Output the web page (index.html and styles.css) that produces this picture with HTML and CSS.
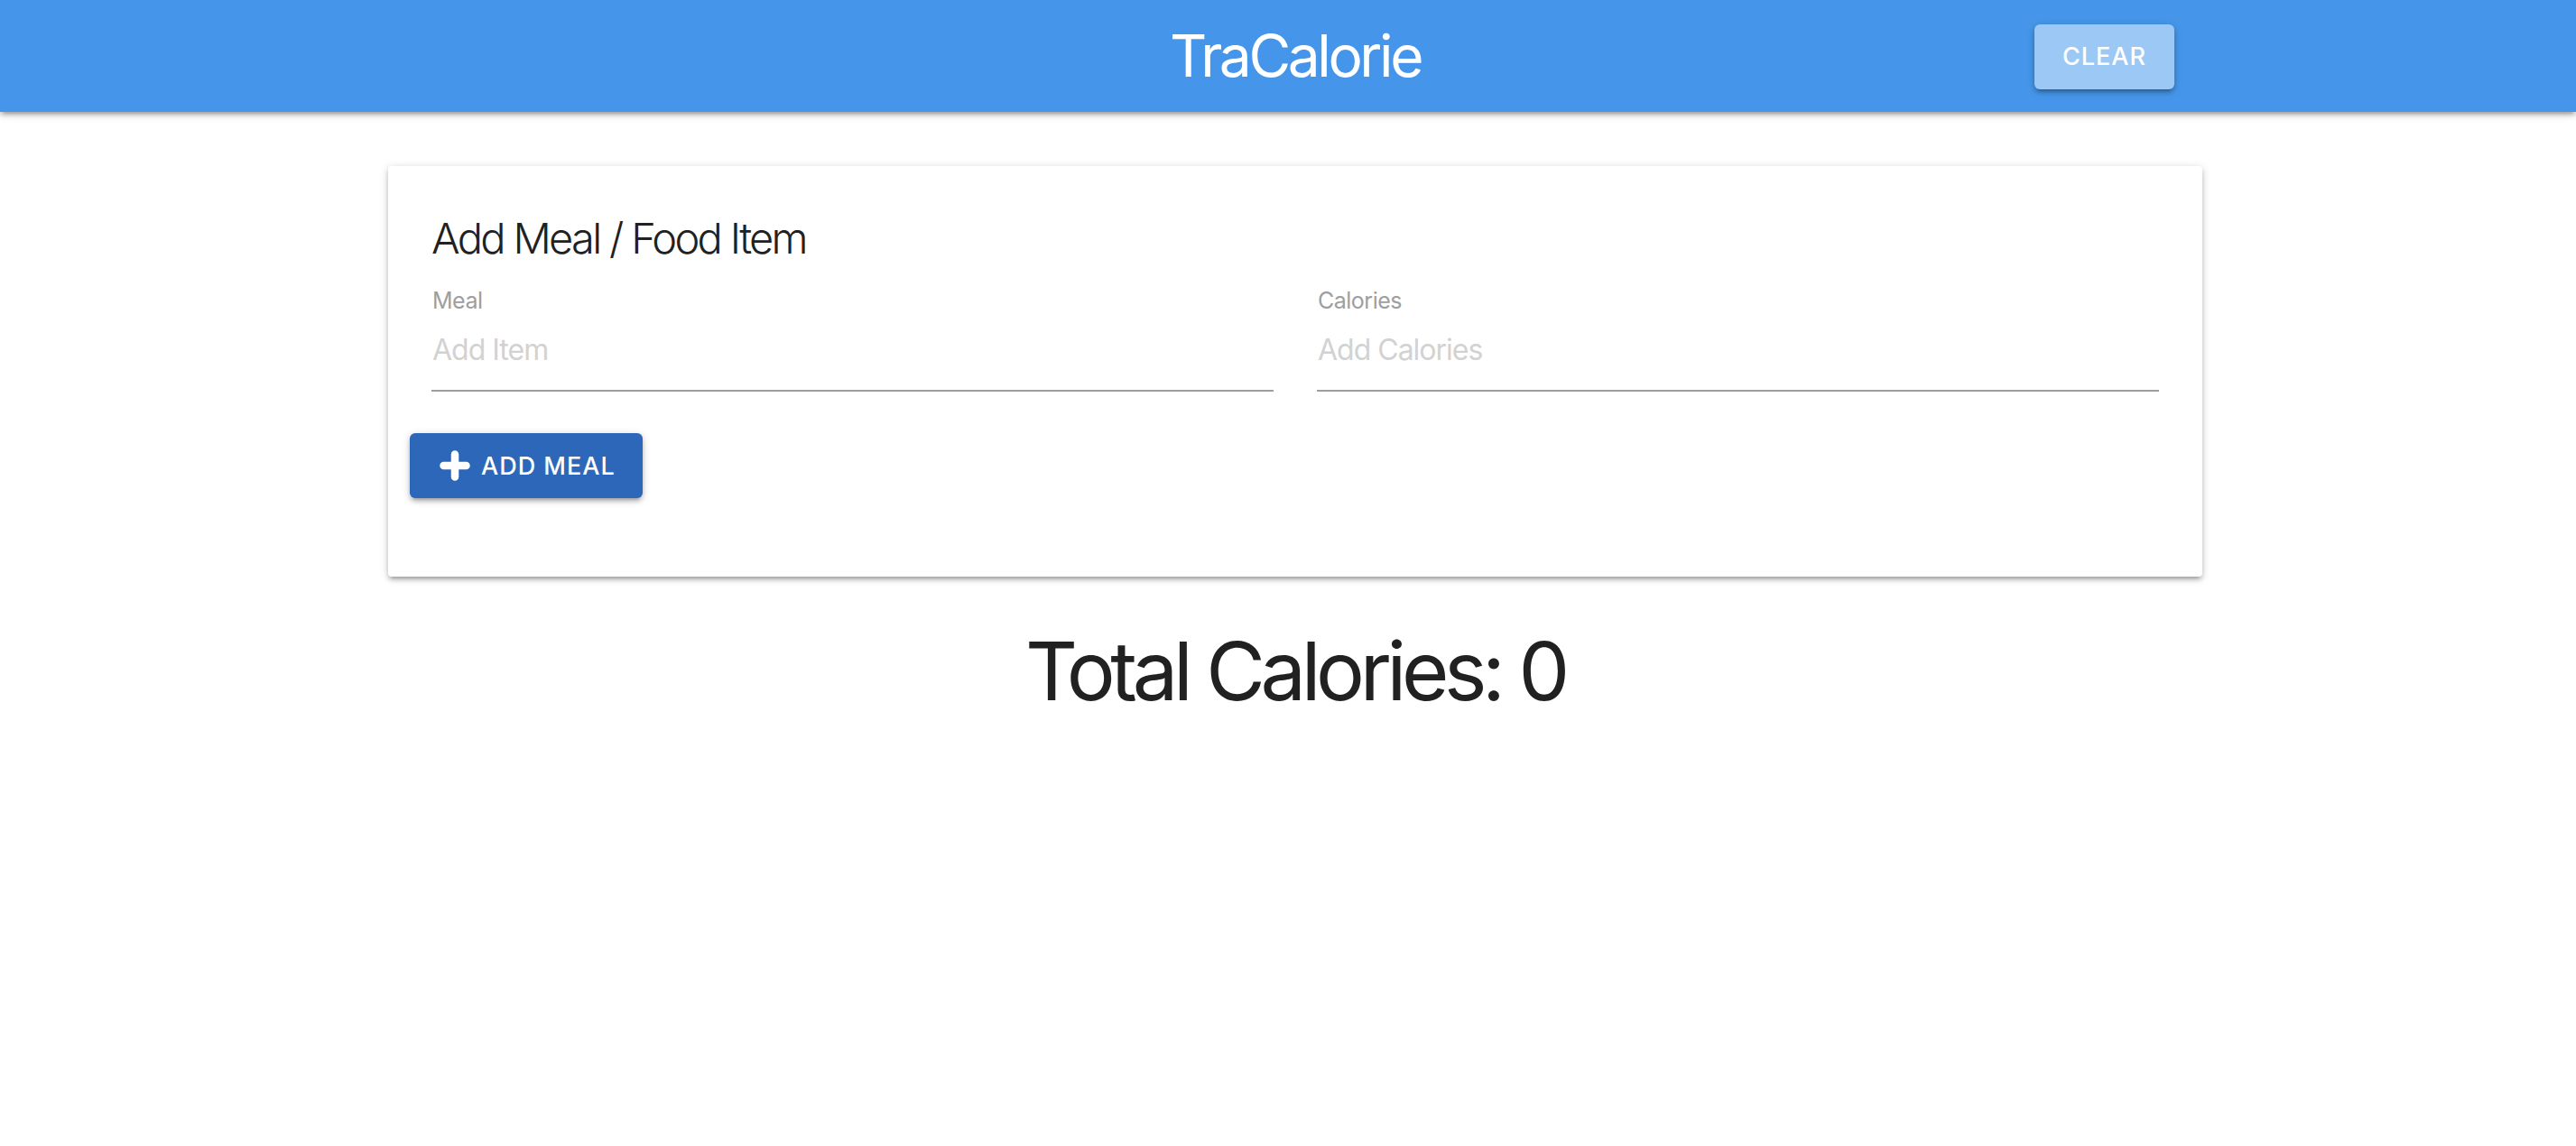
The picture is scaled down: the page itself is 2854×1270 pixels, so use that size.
FILE: index.html
```html
<!DOCTYPE html>
<html lang="en">
<head>
<meta charset="utf-8">
<title>TraCalorie</title>
<link rel="stylesheet" href="styles.css">
</head>
<body>
  <nav class="navbar">
    <div class="nav-inner">
      <span class="nav-spacer"></span>
      <a class="brand">TraCalorie</a>
      <div class="nav-actions">
        <button class="btn btn-clear">Clear</button>
      </div>
    </div>
  </nav>

  <main class="container">
    <section class="card">
      <h2 class="card-title">Add Meal / Food Item</h2>
      <form class="meal-form">
        <div class="fields">
          <div class="field">
            <label class="field-label" for="item-name">Meal</label>
            <input class="field-input" id="item-name" type="text" placeholder="Add Item">
          </div>
          <div class="field">
            <label class="field-label" for="item-calories">Calories</label>
            <input class="field-input" id="item-calories" type="text" placeholder="Add Calories">
          </div>
        </div>
        <button type="button" class="btn btn-add">
          <svg class="plus-icon" viewBox="0 0 34 34" aria-hidden="true">
            <path d="M17 4.5V29.5M4.5 17H29.5" stroke="#fff" stroke-width="8.5" stroke-linecap="round" fill="none"/>
          </svg>
          <span>Add Meal</span>
        </button>
      </form>
    </section>

    <h3 class="total">Total Calories: <span class="total-calories">0</span></h3>
  </main>
</body>
</html>
```

FILE: styles.css
```css
* {
  box-sizing: border-box;
}

html, body {
  margin: 0;
  padding: 0;
  background: #ffffff;
}

body {
  font-family: Inter, "Noto Sans", Roboto, "Liberation Sans", sans-serif;
  color: #212121;
}

/* Navbar */
.navbar {
  height: 124px;
  background: #4596ea;
  box-shadow: 0 4px 4px 0 rgba(0, 0, 0, 0.14),
              0 6px 2px -4px rgba(0, 0, 0, 0.12),
              0 2px 10px 0 rgba(0, 0, 0, 0.2);
}

.nav-inner {
  width: 2010px;
  height: 100%;
  margin: 0 auto;
  padding-left: 16px;
  box-sizing: content-box;
  display: grid;
  grid-template-columns: 1fr auto 1fr;
  align-items: center;
}

.brand {
  color: #ffffff;
  font-size: 64px;
  font-weight: 400;
  letter-spacing: -3.4px;
  line-height: 124px;
  text-decoration: none;
}

.nav-actions {
  display: flex;
  justify-content: flex-end;
  padding-right: 31px;
}

.btn {
  border: none;
  border-radius: 6px;
  color: #ffffff;
  font-family: Inter, "Noto Sans", Roboto, "Liberation Sans", sans-serif;
  font-size: 27px;
  font-weight: 500;
  letter-spacing: 1px;
  text-transform: uppercase;
  cursor: pointer;
  box-shadow: 0 4px 4px 0 rgba(0, 0, 0, 0.14),
              0 6px 2px -4px rgba(0, 0, 0, 0.12),
              0 2px 10px 0 rgba(0, 0, 0, 0.2);
}

.btn-clear {
  width: 155px;
  height: 72px;
  background: #9bc8f4;
  padding: 0;
  margin-top: 1px;
}

/* Main */
.container {
  width: 2010px;
  margin: 0 auto;
  padding-left: 16px;
  padding-top: 60px;
  box-sizing: content-box;
}

.card {
  height: 455px;
  background: #ffffff;
  border-radius: 4px;
  padding: 48px;
  box-shadow: 0 4px 4px 0 rgba(0, 0, 0, 0.14),
              0 6px 2px -4px rgba(0, 0, 0, 0.12),
              0 2px 10px 0 rgba(0, 0, 0, 0.2);
}

.card-title {
  margin: 0;
  font-size: 47px;
  font-weight: 300;
  line-height: 64px;
  letter-spacing: -2.7px;
  color: #212121;
}

.meal-form {
  margin: 0;
}

.fields {
  display: grid;
  grid-template-columns: 1fr 1fr;
  column-gap: 48px;
  padding-top: 21px;
}

.field {
  display: flex;
  flex-direction: column;
}

.field-label {
  font-size: 25px;
  line-height: 32px;
  color: #9e9e9e;
  letter-spacing: -0.5px;
  padding-left: 1px;
}

.field-input {
  height: 85px;
  padding: 0 0 6px 1px;
  border: none;
  border-bottom: 2px solid #9e9e9e;
  outline: none;
  background: transparent;
  font-family: Inter, "Noto Sans", Roboto, "Liberation Sans", sans-serif;
  font-size: 32px;
  letter-spacing: -1px;
  color: #212121;
}

.field-input::placeholder {
  color: #d2d2d2;
}

.btn-add {
  display: inline-flex;
  align-items: center;
  gap: 12px;
  width: 258px;
  height: 72px;
  margin: 46px 0 0 -24px;
  padding: 0 0 0 33px;
  background: #2d67ba;
  font-size: 27px;
}

.plus-icon {
  width: 34px;
  height: 34px;
  flex: none;
}

.total {
  margin: 55px 0 0;
  text-align: center;
  font-size: 90px;
  font-weight: 400;
  line-height: 1.1;
  letter-spacing: -5.4px;
  color: #212121;
}
```
